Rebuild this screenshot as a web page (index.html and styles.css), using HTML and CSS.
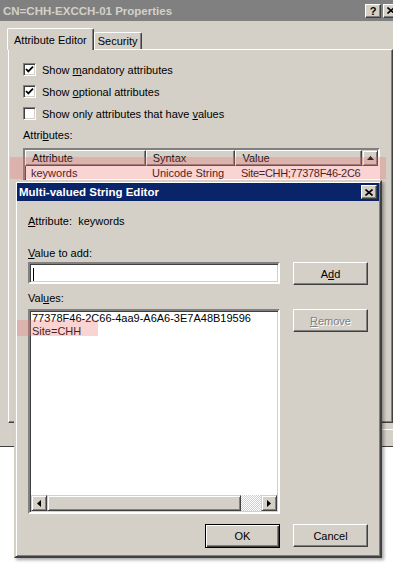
FILE: index.html
```html
<!DOCTYPE html>
<html lang="en">
<head>
    <meta charset="UTF-8">
    <meta name="viewport" content="width=device-width, initial-scale=1.0">
    <title>CN=CHH-EXCCH-01 Properties</title>
    <link rel="stylesheet" href="styles.css">
</head>
<body>
    <div class="screen">
        <div class="window">
            <div class="titlebar inactive">
                <span class="title">CN=CHH-EXCCH-01 Properties</span>
                <span class="caption-btns">
                    <span class="cbtn">?</span>
                    <span class="cbtn">
                        <svg width="8" height="7" viewBox="0 0 8 7"><path d="M0.5 0.5 L7.5 6.5 M7.5 0.5 L0.5 6.5" stroke="#000" stroke-width="1.6"/></svg>
                    </span>
                </span>
            </div>

            <div class="tabs">
                <span class="tab active">Attribute Editor</span>
                <span class="tab">Security</span>
            </div>

            <div class="panel">
                <div class="check">
                    <span class="box"><svg width="9" height="9" viewBox="0 0 9 9"><path d="M1 4 L3.3 6.4 L8 1.6" fill="none" stroke="#000" stroke-width="1.8"/></svg></span>
                    <span>Show <u>m</u>andatory attributes</span>
                </div>
                <div class="check">
                    <span class="box"><svg width="9" height="9" viewBox="0 0 9 9"><path d="M1 4 L3.3 6.4 L8 1.6" fill="none" stroke="#000" stroke-width="1.8"/></svg></span>
                    <span>Show <u>o</u>ptional attributes</span>
                </div>
                <div class="check">
                    <span class="box"></span>
                    <span>Show only attributes that have <u>v</u>alues</span>
                </div>

                <div class="caption">Attri<u>b</u>utes:</div>

                <div class="listview">
                    <div class="lv-head">
                        <span class="hcell c-attr">Attribute</span>
                        <span class="hcell c-syn">Syntax</span>
                        <span class="hcell c-val">Value</span>
                        <span class="sb-btn">
                            <svg width="7" height="4" viewBox="0 0 7 4"><path d="M3.5 0 L7 4 L0 4 Z" fill="#000"/></svg>
                        </span>
                    </div>
                    <div class="lv-row">
                        <span class="cell c-attr">keywords</span>
                        <span class="cell c-syn">Unicode String</span>
                        <span class="cell c-val">Site=CHH;77378F46-2C6</span>
                    </div>
                </div>
            </div>

            <div class="footer">
                <span class="btn blank"></span>
            </div>
        </div>

        <!-- annotation over the selected attribute -->
        <div class="mark mark-row"></div>

        <div class="dialog">
            <div class="titlebar active">
                <span class="title">Multi-valued String Editor</span>
                <span class="caption-btns">
                    <span class="cbtn">
                        <svg width="8" height="7" viewBox="0 0 8 7"><path d="M0.5 0.5 L7.5 6.5 M7.5 0.5 L0.5 6.5" stroke="#000" stroke-width="1.6"/></svg>
                    </span>
                </span>
            </div>

            <div class="dlg-body">
                <div class="label first"><u>A</u>ttribute:&nbsp; keywords</div>
                <div class="label gap"><u>V</u>alue to add:</div>

                <div class="row">
                    <div class="textbox"><span class="caret"></span></div>
                    <span class="btn">A<u>d</u>d</span>
                </div>

                <div class="label small-gap">Val<u>u</u>es:</div>

                <div class="row values-row">
                    <div class="listbox">
                        <div class="items">
                            <div class="item">77378F46-2C66-4aa9-A6A6-3E7A48B19596</div>
                            <div class="item">Site=CHH</div>
                        </div>
                        <div class="hscroll">
                            <span class="sb-btn">
                                <svg width="4" height="7" viewBox="0 0 4 7"><path d="M0 3.5 L4 0 L4 7 Z" fill="#000"/></svg>
                            </span>
                            <span class="thumb"></span>
                            <span class="track"></span>
                            <span class="sb-btn">
                                <svg width="4" height="7" viewBox="0 0 4 7"><path d="M4 3.5 L0 0 L0 7 Z" fill="#000"/></svg>
                            </span>
                        </div>
                    </div>
                    <span class="btn disabled"><u>R</u>emove</span>
                </div>

                <div class="dlg-buttons">
                    <span class="btn default">OK</span>
                    <span class="btn">Cancel</span>
                </div>
            </div>
        </div>

        <!-- annotation over the second value -->
        <div class="mark mark-site"></div>
    </div>
</body>
</html>
```

FILE: styles.css
```css
body {
    margin: 0;
    background: #fff;
}
.screen {
    position: relative;
    width: 395px;
    height: 566px;
    overflow: hidden;
    font-family: 'Liberation Sans', Arial, sans-serif;
    font-size: 11px;
    color: #000;
}
u {
    text-decoration: underline;
    text-underline-offset: 1px;
}

/* outer property sheet */
.window {
    width: 393px;
    height: 446px;
    background: #d4d0c8;
    border-bottom: 1px solid #404040;
    overflow: hidden;
}
.titlebar {
    display: flex;
    align-items: center;
    justify-content: space-between;
    height: 21px;
    padding-left: 3px;
    font-weight: bold;
    font-size: 11.5px;
    white-space: nowrap;
}
.titlebar.inactive {
    background: #808080;
    color: #d4d0c8;
}
.caption-btns {
    display: flex;
    gap: 2px;
    margin-right: -6px;
}
.cbtn {
    display: flex;
    align-items: center;
    justify-content: center;
    width: 14px;
    height: 12px;
    background: #d4d0c8;
    color: #000;
    font-size: 11px;
    border: 1px solid;
    border-color: #fff #404040 #404040 #fff;
    box-shadow: inset -1px -1px #808080;
}

/* tabs */
.tabs {
    display: flex;
    align-items: flex-end;
    height: 28px;
    padding-left: 7px;
}
.tab {
    position: relative;
    height: 16px;
    padding: 0 3px;
    line-height: 17px;
    border: 1px solid;
    border-color: #fff #404040 transparent #fff;
    border-bottom: none;
    box-shadow: inset -1px 0 #808080;
    border-radius: 2px 2px 0 0;
}
.tab.active {
    height: 21px;
    line-height: 22px;
    padding: 0 6px;
    margin-bottom: -1px;
    background: #d4d0c8;
    z-index: 1;
}

.panel {
    height: 359px;
    margin-left: 8px;
    padding: 13px 0 0 14px;
    border: 1px solid;
    border-color: #fff #404040 #404040 #fff;
    box-shadow: inset -1px -1px #808080;
}
.check {
    display: flex;
    align-items: center;
    gap: 6px;
    height: 13px;
    margin-bottom: 9px;
    white-space: nowrap;
}
.box {
    display: flex;
    align-items: center;
    justify-content: center;
    width: 11px;
    height: 11px;
    background: #fff;
    border: 1px solid;
    border-color: #808080 #fff #fff #808080;
    box-shadow: inset 1px 1px #404040, inset -1px -1px #d4d0c8;
}
.caption {
    margin-top: 7px;
    line-height: 13px;
}
.listview {
    width: 353px;
    height: 240px;
    margin-top: 6px;
    background: #fff;
    border: 2px solid;
    border-color: #808080 #fff #fff #808080;
    box-shadow: inset 1px 1px #404040;
}
.lv-head {
    display: flex;
    height: 16px;
}
.hcell {
    box-sizing: border-box;
    height: 16px;
    padding-left: 6px;
    line-height: 15px;
    background: #d4d0c8;
    border: 1px solid;
    border-color: #fff #404040 #404040 #fff;
    box-shadow: inset -1px -1px #808080;
    white-space: nowrap;
    overflow: hidden;
}
.c-attr { width: 121px; }
.c-syn { width: 90px; }
.c-val { width: 127px; }
.lv-row {
    display: flex;
    height: 14px;
    line-height: 14px;
    white-space: nowrap;
}
.cell {
    padding-left: 6px;
    box-sizing: border-box;
    overflow: hidden;
}
.lv-row .c-val {
    padding-left: 5px;
    letter-spacing: -0.3px;
}
.sb-btn {
    display: flex;
    align-items: center;
    justify-content: center;
    box-sizing: border-box;
    width: 16px;
    height: 16px;
    background: #d4d0c8;
    border: 1px solid;
    border-color: #d4d0c8 #404040 #404040 #d4d0c8;
    box-shadow: inset 1px 1px #fff, inset -1px -1px #808080;
    flex-shrink: 0;
}

.footer {
    display: flex;
    justify-content: flex-end;
    margin: 6px -40px 0 0;
}

/* buttons */
.btn {
    display: flex;
    align-items: center;
    justify-content: center;
    box-sizing: border-box;
    width: 75px;
    height: 23px;
    background: #d4d0c8;
    border: 1px solid;
    border-color: #fff #404040 #404040 #fff;
    box-shadow: inset -1px -1px #808080;
    flex-shrink: 0;
}
.btn.default {
    height: 24px;
    border-color: #000;
    box-shadow: inset 1px 1px #fff, inset -1px -1px #404040, inset -2px -2px #808080;
}
.btn.disabled {
    color: #808080;
    text-shadow: 1px 1px #fff;
}

/* string editor dialog */
.dialog {
    position: absolute;
    left: 14px;
    top: 180px;
    width: 362px;
    height: 372px;
    padding: 1px;
    background: #d4d0c8;
    border: 2px solid;
    border-color: #d4d0c8 #404040 #404040 #d4d0c8;
    box-shadow: inset 1px 1px #fff, inset -1px -1px #808080, 2px 2px 3px rgba(0, 0, 0, 0.35);
}
.titlebar.active {
    height: 18px;
    padding-left: 2px;
    background: #0a246a;
    color: #fff;
}
.titlebar.active .caption-btns {
    margin-right: 2px;
}
.dlg-body {
    padding: 14px 11px 0 11px;
}
.label {
    line-height: 13px;
    white-space: nowrap;
}
.label.gap {
    margin-top: 19px;
}
.label.small-gap {
    margin-top: 7px;
}
.row {
    display: flex;
    align-items: flex-start;
    gap: 13px;
    margin-top: 2px;
}
.values-row {
    margin-top: 4px;
}
.textbox {
    box-sizing: border-box;
    width: 252px;
    height: 22px;
    padding: 4px 3px;
    background: #fff;
    border: 2px solid;
    border-color: #808080 #fff #fff #808080;
    box-shadow: inset 1px 1px #404040, inset -1px -1px #d4d0c8;
}
.caret {
    display: block;
    width: 1px;
    height: 13px;
    background: #000;
}
.listbox {
    display: flex;
    flex-direction: column;
    box-sizing: border-box;
    width: 252px;
    height: 205px;
    background: #fff;
    border: 2px solid;
    border-color: #808080 #fff #fff #808080;
    box-shadow: inset 1px 1px #404040, inset -1px -1px #d4d0c8;
}
.items {
    flex: 1;
    padding: 1px 0 0 2px;
}
.item {
    line-height: 13px;
    white-space: nowrap;
}
.hscroll {
    display: flex;
    height: 16px;
    margin: 0 1px 1px 1px;
}
.thumb {
    box-sizing: border-box;
    width: 194px;
    height: 16px;
    background: #d4d0c8;
    border: 1px solid;
    border-color: #d4d0c8 #404040 #404040 #d4d0c8;
    box-shadow: inset 1px 1px #fff, inset -1px -1px #808080;
}
.track {
    flex: 1;
    background-color: #fff;
    background-image: repeating-conic-gradient(#d4d0c8 0 25%, #fff 0 50%);
    background-size: 2px 2px;
}
.dlg-buttons {
    display: flex;
    justify-content: flex-end;
    gap: 13px;
    margin-top: 10px;
}

/* pink highlight annotations */
.mark {
    position: absolute;
    background: rgba(240, 110, 110, 0.3);
}
.mark-row {
    left: 10px;
    top: 157px;
    width: 376px;
    height: 22px;
}
.mark-site {
    left: 17px;
    top: 320px;
    width: 81px;
    height: 16px;
}
```
